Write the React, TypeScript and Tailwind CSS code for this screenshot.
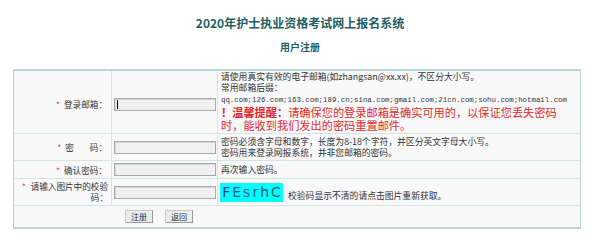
import React from "react";

const cjk = { fontFamily: '"Noto Sans CJK SC", "Noto Sans", sans-serif' };
const mono = { fontFamily: '"Liberation Mono", "Noto Sans CJK SC", monospace' };

function Input({ caret }: { caret?: boolean }) {
  return (
    <div className="ml-[2px] flex h-[13px] w-[102px] items-center border border-[#a8a8a8] bg-[#f0f0f0] shadow-[inset_1px_1px_0_#d8d8d8]">
      {caret && <div className="ml-[2px] h-[9px] w-px bg-black" />}
    </div>
  );
}

function Label({ children }: { children: React.ReactNode }) {
  return (
    <div className="flex items-center justify-end pr-[4px] text-[8.6px] leading-[12px] text-[#333]">
      <span className="mr-[4px] text-[#e0445a]">*</span>
      {children}
    </div>
  );
}

export default function App() {
  return (
    <div className="h-[248px] w-[600px] bg-white" style={cjk}>
      <div className="flex flex-col items-center pt-[15px]">
        <div className="text-[12px] font-bold leading-[16px] text-[#23605f]">
          2020年护士执业资格考试网上报名系统
        </div>
        <div className="mt-[9px] text-[10px] font-bold leading-[14px] text-[#23605f]">
          用户注册
        </div>
      </div>
      <div className="ml-[13px] mt-[15px] w-[568px] border-t-2 border-b-2 border-x border-[#b9d6d4] bg-[#f9f9f9] text-[8.8px] text-[#333]">
        {/* Row 1 */}
        <div className="grid h-[63px] grid-cols-[98px_106px_1fr] border-b border-[#d6e4e3]">
          <div className="flex items-center justify-end border-r border-[#d6e4e3] pt-[4px]">
            <Label>登录邮箱：</Label>
          </div>
          <div className="flex items-center border-r border-[#d6e4e3] pt-[4px]">
            <Input caret />
          </div>
          <div className="overflow-hidden pl-[3px]">
            <div className="leading-[11px]">请使用真实有效的电子邮箱(如zhangsan@xx.xx)，不区分大小写。</div>
            <div className="leading-[12.5px]">常用邮箱后缀：</div>
            <div className="text-[7.4px] leading-[11.5px]" style={mono}>
              qq.com;126.com;163.com;189.cn;sina.com;gmail.com;21cn.com;sohu.com;hotmail.com
            </div>
            <div className="text-[11.2px] leading-[13px] text-[#e02a2a]">
              <span className="font-bold">！温馨提醒：</span>请确保您的登录邮箱是确实可用的，以保证您丢失密码
              <br />
              时，能收到我们发出的密码重置邮件。
            </div>
          </div>
        </div>
        {/* Row 2 */}
        <div className="grid h-[27px] grid-cols-[98px_106px_1fr] border-b border-[#d6e4e3]">
          <div className="flex items-center justify-end border-r border-[#d6e4e3]">
            <Label>
              密<span className="inline-block w-[16px]" />码：
            </Label>
          </div>
          <div className="flex items-center border-r border-[#d6e4e3]">
            <Input />
          </div>
          <div className="flex flex-col justify-center pl-[3px] leading-[11.5px]">
            <div>密码必须含字母和数字，长度为8-18个字符，并区分英文字母大小写。</div>
            <div>密码用来登录网报系统，并非您邮箱的密码。</div>
          </div>
        </div>
        {/* Row 3 */}
        <div className="grid h-[18px] grid-cols-[98px_106px_1fr] border-b border-[#d6e4e3]">
          <div className="flex items-center justify-end border-r border-[#d6e4e3]">
            <Label>确认密码：</Label>
          </div>
          <div className="flex items-center border-r border-[#d6e4e3]">
            <Input />
          </div>
          <div className="flex items-center pl-[3px]">再次输入密码。</div>
        </div>
        {/* Row 4 */}
        <div className="grid h-[27px] grid-cols-[98px_106px_1fr] border-b border-[#d6e4e3]">
          <div className="flex items-center justify-end border-r border-[#d6e4e3] pr-[3px]">
            <div className="text-right text-[8.6px] leading-[11px] text-[#333] whitespace-nowrap">
              <span className="mr-[5px] text-[#e0445a]">*</span>请输入图片中的校验
              <br />
              码：
            </div>
          </div>
          <div className="flex items-center border-r border-[#d6e4e3]">
            <Input />
          </div>
          <div className="flex items-center pl-[2px]">
            <div
              className="flex h-[19px] w-[63px] items-center justify-center bg-[#00ffff] pl-[2px] text-[14px] leading-none tracking-[2px] text-[#1a4a8c]"
              style={{ fontFamily: '"DejaVu Sans", sans-serif' }}
            >
              <span>F</span>
              <span className="text-[#1d5a9a]">E</span>
              <span className="text-[#3b5fa8]">s</span>
              <span className="text-[#1a6a7a]">r</span>
              <span className="text-[#1f5a6a]">h</span>
              <span className="text-[#1a6a6a]">C</span>
            </div>
            <div className="ml-[5px] mt-[8px]">校验码显示不清的请点击图片重新获取。</div>
          </div>
        </div>
        {/* Row 5 */}
        <div className="flex h-[21px] items-center pl-[111px]">
          <button className="h-[13px] w-[28px] border border-[#c8c8c8] border-b-[#999] border-r-[#999] bg-[#ececec] text-[8px] leading-[11px] text-[#333]">
            注册
          </button>
          <button className="ml-[12px] h-[13px] w-[28px] border border-[#c8c8c8] border-b-[#999] border-r-[#999] bg-[#ececec] text-[8px] leading-[11px] text-[#333]">
            返回
          </button>
        </div>
      </div>
    </div>
  );
}
